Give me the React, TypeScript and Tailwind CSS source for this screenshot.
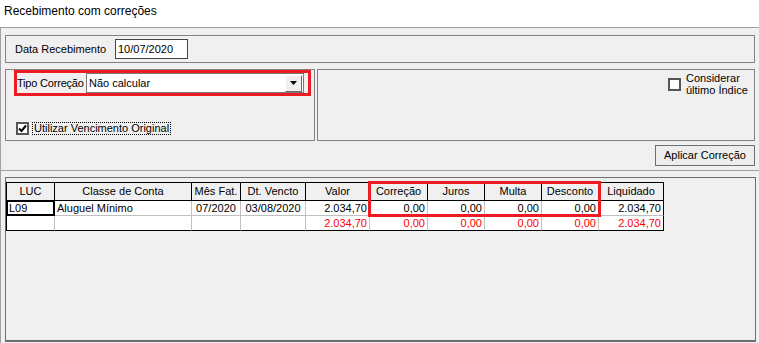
import React from 'react';

interface Col {
  label: string;
  w: string;
  align: string;
  r1: string;
  r2: string;
}

const cols: Col[] = [
  { label: 'LUC', w: 'w-[48px]', align: 'justify-start pl-[2px]', r1: 'L09', r2: '' },
  { label: 'Classe de Conta', w: 'w-[137px]', align: 'justify-start pl-[2px]', r1: 'Aluguel Mínimo', r2: '' },
  { label: 'Mês Fat.', w: 'w-[49px]', align: 'justify-center', r1: '07/2020', r2: '' },
  { label: 'Dt. Vencto', w: 'w-[65px]', align: 'justify-center', r1: '03/08/2020', r2: '' },
  { label: 'Valor', w: 'w-[64px]', align: 'justify-end pr-[2px]', r1: '2.034,70', r2: '2.034,70' },
  { label: 'Correção', w: 'w-[58px]', align: 'justify-end pr-[2px]', r1: '0,00', r2: '0,00' },
  { label: 'Juros', w: 'w-[57px]', align: 'justify-end pr-[2px]', r1: '0,00', r2: '0,00' },
  { label: 'Multa', w: 'w-[57px]', align: 'justify-end pr-[2px]', r1: '0,00', r2: '0,00' },
  { label: 'Desconto', w: 'w-[57px]', align: 'justify-end pr-[2px]', r1: '0,00', r2: '0,00' },
  { label: 'Liquidado', w: 'w-[65px]', align: 'justify-end pr-[2px]', r1: '2.034,70', r2: '2.034,70' },
];

const CheckBox: React.FC<{ checked?: boolean }> = ({ checked }) => (
  <div className="w-[13px] h-[13px] border-2 border-[#555] bg-white flex items-center justify-center shrink-0">
    {checked && (
      <svg width="9" height="9" viewBox="0 0 9 9">
        <path d="M1 4.5 L3.5 7 L8 1.5" fill="none" stroke="#000" strokeWidth="2" />
      </svg>
    )}
  </div>
);

const App: React.FC = () => {
  return (
    <div className="w-[759px] h-[343px] bg-white overflow-hidden font-['Liberation_Sans',Arial,sans-serif] text-black text-[11px] leading-[13px]">
      <div className="h-[27px] pl-[4px] pt-[3px] text-[12px] leading-[16px]">Recebimento com correções</div>

      {/* top area */}
      <div className="h-[144px] bg-[#f0f0f0] border-t border-b border-l border-[#a0a0a0] pl-[4px] pr-[4px] pt-[7px] pb-[4px] flex flex-col">
        <div className="h-[28px] border border-[#828282] flex items-center pl-[9px]">
          <span className="w-[100px]">Data Recebimento</span>
          <div className="w-[73px] h-[20px] border border-[#444] bg-white flex items-center pl-[2px]">10/07/2020</div>
        </div>

        <div className="h-[72px] mt-[6px] flex">
          <div className="relative w-[310px] border border-[#828282]">
            <div className="flex items-center pt-[3px] pl-[11px]">
              <span className="w-[69px] whitespace-nowrap tracking-[-0.2px]">Tipo Correção</span>
              <div className="w-[218px] h-[20px] shrink-0 border border-[#7a7a7a] bg-white flex items-center pl-[2px]">
                <span className="flex-1">Não calcular</span>
                <div className="w-[17px] h-[17px] mr-[1px] bg-[#f0f0f0] border border-t-white border-l-white border-r-[#696969] border-b-[#696969] flex items-center justify-center">
                  <svg width="7" height="4" viewBox="0 0 7 4">
                    <polygon points="0,0 7,0 3.5,4" fill="#000" />
                  </svg>
                </div>
              </div>
            </div>
            <div className="flex items-center mt-[29px] pl-[10px]">
              <CheckBox checked />
              <span className="ml-[3px] px-[1px] border border-dotted border-black leading-[11px] whitespace-nowrap">Utilizar Vencimento Original</span>
            </div>
            <div className="absolute left-[8px] top-0 w-[297px] h-[26px] border-[3px] border-[#ed1c24]" />
          </div>

          <div className="flex-1 ml-[2px] border border-[#828282] pt-[2px] pl-[350px]">
            <div className="flex items-center">
              <CheckBox />
              <div className="ml-[5px] leading-[12px]">
                <div>Considerar</div>
                <div>último Índice</div>
              </div>
            </div>
          </div>
        </div>

        <div className="flex justify-end mt-[4px]">
          <button className="w-[100px] h-[21px] border border-[#707070] bg-[#ededed] text-[11px] leading-[13px]">Aplicar Correção</button>
        </div>
      </div>

      {/* grid area */}
      <div className="h-[172px] bg-[#f0f0f0] border-l border-[#a0a0a0] pl-[4px] pr-[3px] pt-[6px]">
        <div className="h-[165px] border border-[#6d6d6d] border-b-2 pt-[4px]">
          <div className="relative">
            <div className="inline-flex flex-col border-l border-t border-black">
              <div className="flex">
                {cols.map(c => (
                  <div key={c.label} className={`${c.w} h-[18px] border-r border-b border-black bg-[#f0f0f0] flex items-center justify-center`}>
                    {c.label}
                  </div>
                ))}
              </div>
              <div className="flex">
                {cols.map((c, i) => (
                  <div key={c.label} className={`${c.w} h-[15px] border-b border-r border-b-[#c0c0c0] ${i === cols.length - 1 ? 'border-r-black' : 'border-r-[#c0c0c0]'} bg-white flex items-center ${c.align}`}>
                    {c.r1}
                  </div>
                ))}
              </div>
              <div className="flex">
                {cols.map((c, i) => (
                  <div key={c.label} className={`${c.w} h-[15px] border-b border-r border-b-black ${i === cols.length - 1 ? 'border-r-black' : 'border-r-[#c0c0c0]'} bg-white text-[#ff0000] flex items-center ${c.align}`}>
                    {c.r2}
                  </div>
                ))}
              </div>
            </div>
            <div className="absolute left-0 top-[18px] w-[49px] h-[16px] border-2 border-black" />
            <div className="absolute left-[362px] top-[-1px] w-[233px] h-[36px] border-[3px] border-[#ed1c24]" />
          </div>
        </div>
      </div>
    </div>
  );
};

export default App;
